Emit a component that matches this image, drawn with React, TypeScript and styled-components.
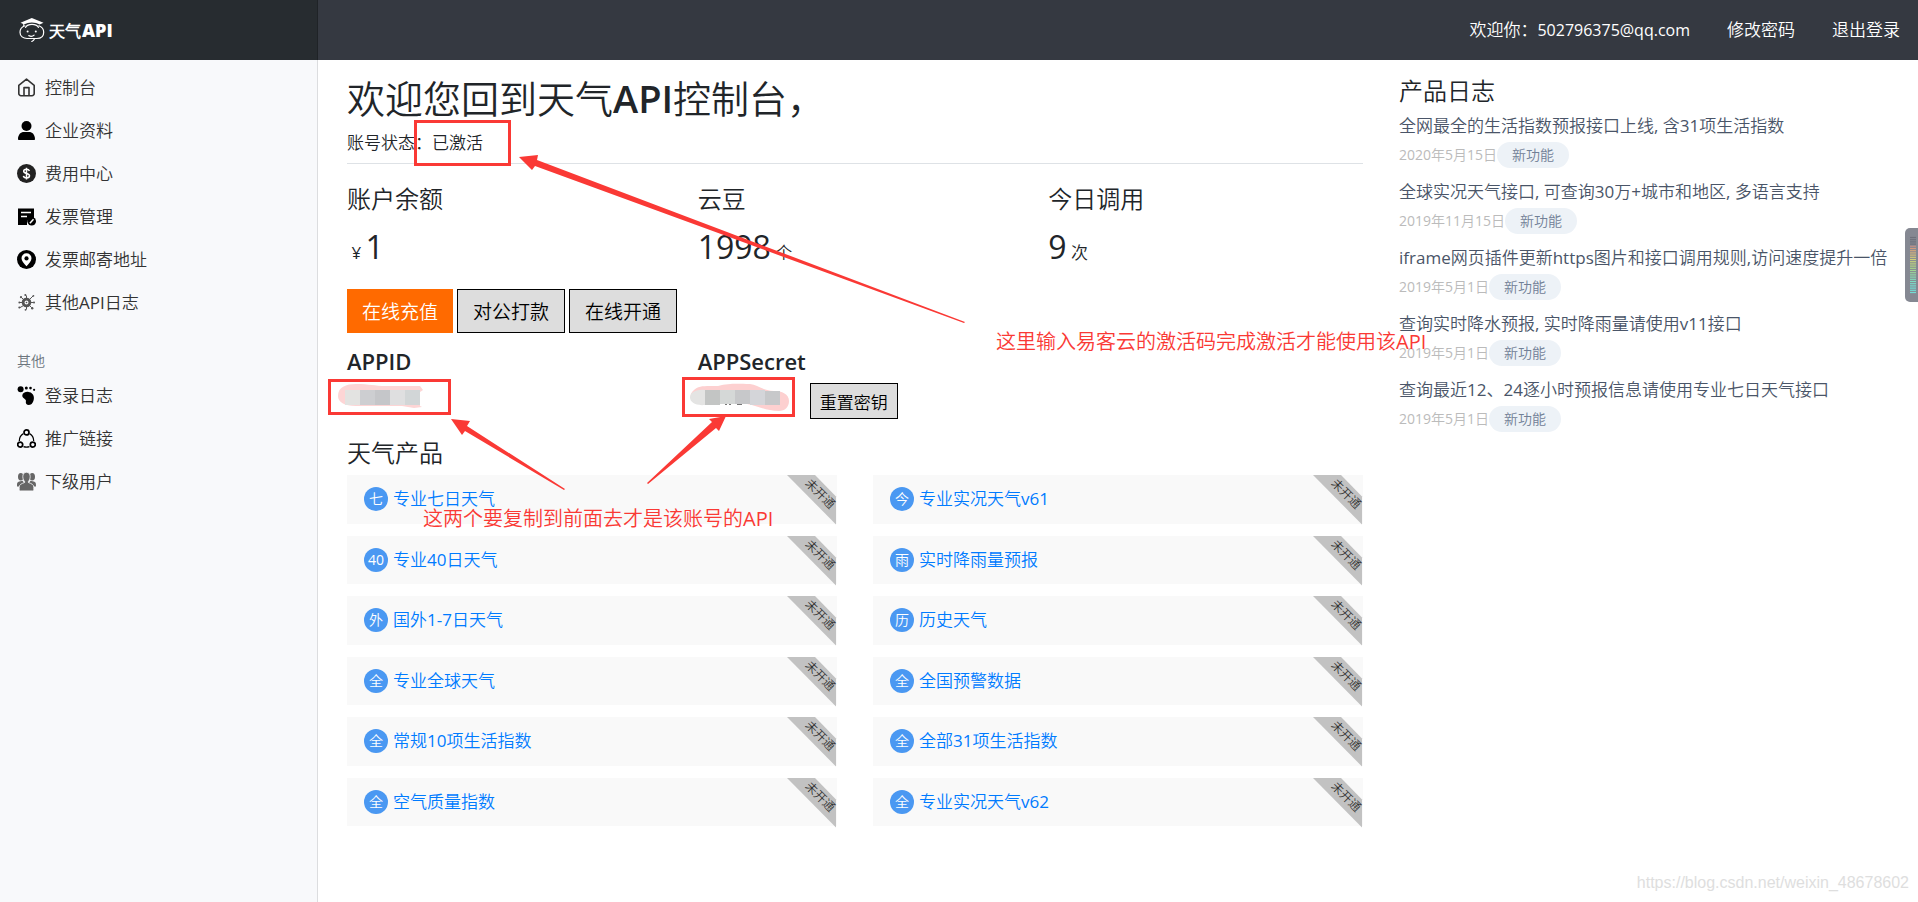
import React from "react";
import styled, { createGlobalStyle } from "styled-components";

const sans = '"Open Sans", "Noto Sans CJK SC DemiLight", "Noto Sans CJK SC", sans-serif';

const GlobalStyle = createGlobalStyle`
  *, *::before, *::after { box-sizing: border-box; }
  body {
    margin: 0;
    background: #fff;
    color: #212529;
    font-family: ${sans};
    font-size: 17px;
    line-height: 26px;
  }
  h1, h2, h3, p, ul { margin: 0; padding: 0; }
  h1, h2, h3 { font-weight: 400; }
  ul { list-style: none; }
  a { text-decoration: none; color: inherit; }
`;

const Page = styled.div`
  position: relative;
  min-height: 100vh;
  display: flex;
  flex-direction: column;
  overflow: hidden;
`;

const TopBar = styled.header`
  display: flex;
  height: 60px;
  background: #353941;
  color: #fff;
`;

const Brand = styled.a`
  display: flex;
  align-items: center;
  gap: 4px;
  width: 318px;
  padding-left: 19px;
  background: #272c30;
  border-right: 1px solid #1f2327;
  font-weight: 700;
  font-size: 16px;
`;

const BrandLatin = styled.span`
  padding-left: 1px;
  font-weight: 800;
  font-size: 18px;
`;

const TopLinks = styled.nav`
  display: flex;
  flex: 1;
  align-items: center;
  justify-content: flex-end;
  gap: 37px;
  padding-right: 18px;
`;

const Email = styled.span`
  font-size: 16px;
`;

const Body = styled.div`
  display: flex;
  flex: 1;
`;

const SideBar = styled.aside`
  width: 318px;
  flex: none;
  padding-top: 6px;
  background: #f8f9fb;
  border-right: 1px solid #dcdddf;
  color: #333;
`;

const SideHeading = styled.h3`
  padding: 27px 17px 3px;
  font-size: 14px;
  line-height: 20px;
  color: #6c757d;
`;

const SideLink = styled.a`
  display: flex;
  align-items: center;
  gap: 9px;
  height: 43px;
  padding-left: 17px;

  svg { flex: none; }
`;

const Main = styled.main`
  flex: 1;
  display: grid;
  grid-template-columns: 2fr 1fr;
  column-gap: 36px;
  align-items: start;
  padding: 0 11px 40px 29px;
`;

const Console = styled.section`
  padding-top: 15px;
`;

const Title = styled.h1`
  font-size: 38px;
  line-height: 46px;
`;

const Strong = styled.span`
  font-weight: 600;
`;

const Status = styled.p`
  padding: 9px 0 7px;
  border-bottom: 1px solid #dee2e6;
`;

const Heading = styled.h2`
  font-size: 24px;
  line-height: 30px;
  white-space: nowrap;
`;

const KeyHeading = styled(Heading)`
  font-size: 22px;
  font-weight: 600;
`;

const Columns = styled.div`
  display: grid;
  grid-template-columns: repeat(3, 1fr);
  column-gap: 36px;
`;

const Stats = styled(Columns)`
  padding-top: 20px;
`;

const Amount = styled.p`
  padding: 9px 0 12px;
  line-height: 48px;
`;

const Figure = styled.span`
  font-size: 32px;
`;

const Actions = styled.div`
  display: flex;
  gap: 4px;
  margin-bottom: 13px;
`;

const Button = styled.button<{ $primary?: boolean; $small?: boolean }>`
  height: ${(p) => (p.$small ? 36 : 44)}px;
  padding: 0 ${(p) => (p.$small ? 9 : 15)}px;
  border: ${(p) => (p.$primary ? "0" : "1px solid #000")};
  border-radius: 0;
  background: ${(p) => (p.$primary ? "#ff6a00" : "#ddd")};
  color: ${(p) => (p.$primary ? "#fff" : "#000")};
  font-family: inherit;
  font-size: ${(p) => (p.$small ? 17 : 19)}px;
  cursor: pointer;
`;

const Credential = styled.div`
  padding-bottom: 19px;
`;

const CredentialRow = styled.div`
  padding: 7px 0 0 112px;
`;

const Products = styled.ul`
  display: grid;
  grid-template-columns: 1fr 1fr;
  gap: 12px 36px;
  min-height: 358px;
  padding-top: 7px;
`;

const Product = styled.li`
  position: relative;
  display: flex;
  align-items: center;
  gap: 5px;
  padding-left: 17px;
  background: #f9f9f9;
  color: #007bff;
`;

const Dot = styled.span`
  width: 24px;
  height: 24px;
  border-radius: 50%;
  background: #4a98f2;
  color: #fff;
  font-size: 14px;
  line-height: 24px;
  text-align: center;
`;

const Ribbon = styled.svg`
  position: absolute;
  top: 0;
  right: 0;
`;

const News = styled.section`
  padding-top: 16px;
`;

const NewsItem = styled.li`
  padding: 7px 0 4px;
  color: #4a5568;
`;

const NewsMeta = styled.div`
  display: flex;
  align-items: center;
  margin-top: 3px;
  font-size: 14px;
  color: #bbb;
`;

const Tag = styled.span`
  padding: 0 15px;
  border-radius: 13px;
  background: #edf2f7;
  color: #718096;
`;

const Notes = styled.svg`
  position: absolute;
  top: 0;
  left: 0;
  pointer-events: none;

  text { font-family: ${sans}; font-size: 20px; }
`;

const Meter = styled.svg`
  position: absolute;
  top: 228px;
  right: 0;
`;

const Watermark = styled.span`
  position: absolute;
  right: 9px;
  bottom: 6px;
  font-family: "Liberation Sans", sans-serif;
  font-size: 16px;
  color: #dedede;
`;

const Icon = ({ children }: { children: React.ReactNode }) => (
  <svg width="19" height="19" viewBox="0 0 19 19" aria-hidden="true">{children}</svg>
);

const HomeIcon = () => (
  <Icon>
    <g fill="none" stroke="#333" strokeWidth="1.6" strokeLinejoin="round">
      <path d="M1.8 7.4 9.5 1.2l7.7 6.2v8.1a2.2 2.2 0 0 1-2.2 2.2H4a2.2 2.2 0 0 1-2.2-2.2z" />
      <path d="M7 17.5V9.6h5v7.9" />
    </g>
  </Icon>
);

const UserIcon = () => (
  <Icon>
    <circle cx="9.5" cy="5" r="5" />
    <path d="M1 18.2C1 13.6 3.8 11 7 11h5c3.2 0 6 2.6 6 7.2a.8.8 0 0 1-.8.8H1.8a.8.8 0 0 1-.8-.8z" />
  </Icon>
);

const MoneyIcon = () => (
  <Icon>
    <circle cx="9.5" cy="9.5" r="9.5" fill="#222" />
    <path d="M12.4 6.9C12 5.7 11 5.2 9.5 5.2c-1.7 0-2.8.8-2.8 2.1 0 3 5.8 1.3 5.8 4.4 0 1.3-1.2 2.2-3 2.2-1.6 0-2.8-.7-3.100-2M9.5 3.7v11.7" fill="none" stroke="#fff" strokeWidth="1.5" />
  </Icon>
);

const InvoiceIcon = () => (
  <Icon>
    <path d="M1 1.5h16v9.5h-2a5 5 0 0 0-5 5v2H1z" />
    <path d="M4 5.5h10M4 9.5h6" stroke="#fff" strokeWidth="1.4" />
    <circle cx="14.7" cy="14.3" r="4.3" />
    <path d="M12.9 16.2l3.6-3.9" stroke="#fff" strokeWidth="1.5" />
  </Icon>
);

const PinIcon = () => (
  <Icon>
    <circle cx="9.5" cy="9.5" r="9.5" />
    <path d="M9.5 3.3a5 5 0 0 0-5 5c0 2.7 2.5 5.2 5 7.9 2.5-2.7 5-5.2 5-7.9a5 5 0 0 0-5-5z" fill="#fff" />
    <circle cx="9.5" cy="8.4" r="2.1" />
  </Icon>
);

const VirusIcon = () => (
  <Icon>
    <g stroke="#555" fill="none">
      <circle cx="9.5" cy="9.5" r="3.4" strokeWidth="2.8" />
      <path d="M9.5 5V2.5M9.5 14v2.5M5 9.5H2.5M14 9.5h2.5M6.3 6.3 4.4 4.4M12.7 6.3l3.4-3.4M6.3 12.7l-3.5 2M12.7 12.7l2 2" strokeWidth="1" />
    </g>
    <g fill="#555">
      <circle cx="8.3" cy="2" r="1" /><circle cx="16.4" cy="2.8" r=".9" /><circle cx="17" cy="9.5" r="1" />
      <circle cx="15.2" cy="15.3" r="1.2" /><circle cx="8.5" cy="16.8" r=".9" /><circle cx="2.3" cy="14.6" r="1" />
      <circle cx="2.3" cy="9.5" r=".9" /><circle cx="4" cy="4.2" r="1.1" /><circle cx="9.5" cy="9.5" r=".8" />
    </g>
  </Icon>
);

const FootIcon = () => (
  <Icon>
    <circle cx="3.6" cy="3.2" r="3" />
    <circle cx="9.3" cy="1.9" r="1.5" />
    <circle cx="13.5" cy="2.1" r="1.3" />
    <circle cx="17.1" cy="3.8" r="1.1" />
    <path d="M5.3 9.3C5.5 7 8.5 5.6 11.5 5.9c3.3.3 5.5 2.7 5.4 6.1-.1 4.2-2.3 7-5 7-2.3 0-3.5-1.7-3-3.8.6-2.4-3.9-2.5-3.6-5.9z" />
  </Icon>
);

const ShareIcon = () => (
  <Icon>
    <g fill="none" stroke="#000">
      <path d="M6.4 4.6C3.8 6 2.3 8.6 2.3 12M12.6 4.6c2.6 1.4 4.1 4 4.1 7.4M6.5 17.6c2 .7 4 .7 6 0" strokeWidth="1.2" />
      <circle cx="9.5" cy="3.4" r="2.5" strokeWidth="1.7" />
      <circle cx="3.2" cy="15.6" r="2.5" strokeWidth="1.7" />
      <circle cx="15.8" cy="15.6" r="2.5" strokeWidth="1.7" />
    </g>
  </Icon>
);

const GroupIcon = () => (
  <Icon>
    <g fill="#666">
      <ellipse cx="3.8" cy="4.8" rx="2.8" ry="3.8" />
      <ellipse cx="15.2" cy="4.8" rx="2.8" ry="3.8" />
      <path d="M0 14.5c0-3.5 0-4 2.3-5l3.2-.8 1.5 2-3 3.8zM19 14.5c0-3.5 0-4-2.3-5l-3.2-.8-1.5 2 3 3.8z" />
    </g>
    <g fill="#666" stroke="#f8f9fb" strokeWidth=".8">
      <path d="M9.5.3c2.4 0 3.7 1.7 3.7 4.3 0 2.3-.9 3.8-1.8 4.9v1c2.8 1.2 5.4 1.7 5.4 4.8v2.2c0 1-.4 1.4-1.3 1.4h-12c-.9 0-1.3-.4-1.3-1.4v-2.2c0-3.1 2.6-3.6 5.4-4.8v-1c-.9-1.1-1.8-2.6-1.8-4.9C5.8 2 7.1.3 9.5.3z" />
    </g>
  </Icon>
);

const BrandMark = () => (
  <svg width="26" height="26" viewBox="0 0 26 26" aria-hidden="true">
    <path d="M1.5 5.8 12.8 1l11.7 4.8-3.8 1.7c-4.3-2.8-11.4-2.8-15.6 0v2.3h-.9V7z" fill="#fff" />
    <g fill="none" stroke="#fff" strokeWidth="1.2" strokeLinecap="round">
      <path d="M5.8 8.8C2.7 10 1 12.3 1 15.2c0 4 3.1 6.4 7.3 6.3h9.5c4.3 0 6.9-2.4 6.9-6.3 0-2.9-1.7-5.2-4.8-6.4" />
      <path d="M6.5 10.3c2.5-3.8 10.5-3.8 13 0M15.6 21.6c-.6 1.5-1.5 2.3-2.8 2.9M9.8 18.6c1.8.9 3.8.9 5.3-.5" />
    </g>
    <circle cx="8.6" cy="14.5" r="1" fill="#fff" />
    <circle cx="16.8" cy="14.5" r="1" fill="#fff" />
  </svg>
);

const sideMain = [
  { label: "控制台", icon: HomeIcon },
  { label: "企业资料", icon: UserIcon },
  { label: "费用中心", icon: MoneyIcon },
  { label: "发票管理", icon: InvoiceIcon },
  { label: "发票邮寄地址", icon: PinIcon },
  { label: "其他API日志", icon: VirusIcon },
];

const sideOther = [
  { label: "登录日志", icon: FootIcon },
  { label: "推广链接", icon: ShareIcon },
  { label: "下级用户", icon: GroupIcon },
];

const products = [
  ["七", "专业七日天气"],
  ["今", "专业实况天气v61"],
  ["40", "专业40日天气"],
  ["雨", "实时降雨量预报"],
  ["外", "国外1-7日天气"],
  ["历", "历史天气"],
  ["全", "专业全球天气"],
  ["全", "全国预警数据"],
  ["全", "常规10项生活指数"],
  ["全", "全部31项生活指数"],
  ["全", "空气质量指数"],
  ["全", "专业实况天气v62"],
];

const news = [
  ["全网最全的生活指数预报接口上线, 含31项生活指数", "2020年5月15日"],
  ["全球实况天气接口, 可查询30万+城市和地区, 多语言支持", "2019年11月15日"],
  ["iframe网页插件更新https图片和接口调用规则,访问速度提升一倍", "2019年5月1日"],
  ["查询实时降水预报, 实时降雨量请使用v11接口", "2019年5月1日"],
  ["查询最近12、24逐小时预报信息请使用专业七日天气接口", "2019年5月1日"],
];

const meterColors = [
  "#6d707b", "#6d707b", "#6d707b", "#6d707b", "#c08f85", "#d39a7c", "#d3a57c", "#d3b27c", "#d3bd7c",
  "#d3c87c", "#d0d07c", "#c6d37c", "#bcd580", "#b3d685", "#a9d68b", "#9fd692", "#97d69b",
  "#90d8a6", "#8adab0", "#84dcba", "#7edcc2", "#7adcc9", "#76dccf", "#72ddd4", "#72ddd4", "#72ddd4",
];

const NotActive = () => (
  <Ribbon width="50" height="50" viewBox="0 0 50 50">
    <path d="M0 0h28l21 21.5v28z" fill="#c2c2c2" />
    <text x="33" y="23" transform="rotate(45 33 19)" textAnchor="middle" fontSize="12" fill="#333">未开通</text>
  </Ribbon>
);

const SideList = ({ items }: { items: typeof sideMain }) => (
  <ul>
    {items.map(({ label, icon: Glyph }) => (
      <li key={label}><SideLink href="#"><Glyph />{label}</SideLink></li>
    ))}
  </ul>
);

export default function App() {
  return (
    <Page>
      <GlobalStyle />
      <TopBar>
        <Brand href="#">
          <BrandMark />
          <span>天气<BrandLatin>API</BrandLatin></span>
        </Brand>
        <TopLinks>
          <span>欢迎你：<Email>502796375@qq.com</Email></span>
          <a href="#">修改密码</a>
          <a href="#">退出登录</a>
        </TopLinks>
      </TopBar>
      <Body>
        <SideBar>
          <SideList items={sideMain} />
          <SideHeading>其他</SideHeading>
          <SideList items={sideOther} />
        </SideBar>
        <Main>
          <Console>
            <Title>欢迎您回到天气<Strong>API</Strong>控制台，</Title>
            <Status>账号状态：已激活</Status>
            <Stats>
              <div>
                <Heading>账户余额</Heading>
                <Amount>&nbsp;¥ <Figure>1</Figure></Amount>
              </div>
              <div>
                <Heading>云豆</Heading>
                <Amount><Figure>1998</Figure> 个</Amount>
              </div>
              <div>
                <Heading>今日调用</Heading>
                <Amount><Figure>9</Figure> 次</Amount>
              </div>
            </Stats>
            <Actions>
              <Button $primary>在线充值</Button>
              <Button>对公打款</Button>
              <Button>在线开通</Button>
            </Actions>
            <Columns>
              <Credential>
                <KeyHeading>APPID</KeyHeading>
              </Credential>
              <Credential>
                <KeyHeading>APPSecret</KeyHeading>
                <CredentialRow><Button $small>重置密钥</Button></CredentialRow>
              </Credential>
            </Columns>
            <Heading>天气产品</Heading>
            <Products>
              {products.map(([mark, name]) => (
                <Product key={name}>
                  <Dot>{mark}</Dot>
                  <a href="#">{name}</a>
                  <NotActive />
                </Product>
              ))}
            </Products>
          </Console>
          <News>
            <Heading>产品日志</Heading>
            <ul>
              {news.map(([title, date]) => (
                <NewsItem key={title}>
                  <a href="#">{title}</a>
                  <NewsMeta>{date}<Tag>新功能</Tag></NewsMeta>
                </NewsItem>
              ))}
            </ul>
          </News>
        </Main>
      </Body>
      <Notes width="1440" height="540" viewBox="0 0 1440 540">
        <path d="M338 396c0-9 8-12 18-12 14 0 18 2 30 2h34l3 4-3 2v14l2 1-8 1-12-2h-46c-12 0-18-4-18-10z" fill="#fdd5d5" />
        <path d="M345 390h15v15h-15z" fill="#e3e3e1" />
        <path d="M360 390h15v15h-15z" fill="#cdced1" />
        <path d="M375 390h15v15h-15z" fill="#c5c6c9" />
        <path d="M390 390h15v15h-15z" fill="#dfdfe0" />
        <path d="M405 390h15v15h-15z" fill="#d2d6d7" />
        <path d="M694 390c4-5 14-4 24-4 12-3 20-2 32-2 8 1 12 6 24 7 8 0 15 3 15 10 0 6-4 10-10 10-13 0-20-5-32-7h-44c-12 0-16-8-9-14z" fill="#fdd0d0" />
        <path d="M705 390v15c-20 2-20-17 0-15z" fill="#e4e4e3" />
        <path d="M705 390h15v15h-15z" fill="#c3c5c4" />
        <path d="M720 390h15v14h-15z" fill="#d5d8d7" />
        <path d="M735 390h15v14h-15z" fill="#c7c8ca" />
        <path d="M750 390h15v15h-15z" fill="#d4d5d9" />
        <path d="M765 391h15v14h-15z" fill="#c7c8ca" />
        <path d="M725 404h2v1h-2zM729 404h2v1h-2zM737 404h5v1h-5z" fill="#777" />
        <g fill="none" stroke="#fa3935" strokeWidth="3">
          <rect x="415.5" y="121.5" width="94" height="43" />
          <rect x="329.5" y="380.5" width="120" height="33" />
          <rect x="683.5" y="378.5" width="110" height="37" />
        </g>
        <g fill="#fa3935">
          <path d="M519 157l19-2-1 5 428 162-1 1-429-157-3 4z" />
          <path d="M451 419l19 2-3 5 98 63-1 1-99-59-3 4z" />
          <path d="M726 416l-7 15-3-3-68 56-1-1 65-61-3-3z" />
          <text x="996" y="349">这里输入易客云的激活码完成激活才能使用该API</text>
          <text x="423" y="526">这两个要复制到前面去才是该账号的API</text>
        </g>
      </Notes>
      <Meter width="13" height="74" viewBox="0 0 13 74" aria-hidden="true">
        <rect width="18" height="74" rx="5" fill="#858892" />
        {meterColors.map((color, i) => (
          <path key={i} d={`M5 ${9.5 + i * 2.2}h6`} stroke={color} strokeWidth="1.2" />
        ))}
      </Meter>
      <Watermark>https://blog.csdn.net/weixin_48678602</Watermark>
    </Page>
  );
}
